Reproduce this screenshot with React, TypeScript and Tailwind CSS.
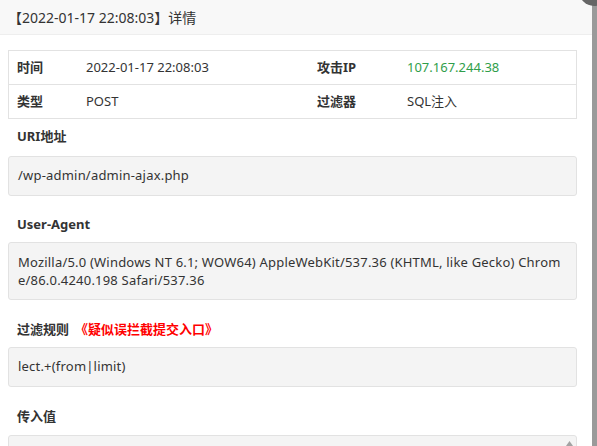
export default function App() {
  const font = "font-['Noto_Sans','Noto_Sans_CJK_SC',sans-serif]";
  return (
    <div className={`relative h-[446px] w-[597px] overflow-hidden bg-[#9a9a9a] ${font}`}>
      {/* Dialog */}
      <div className="h-full w-[592px] bg-white">
        <div className="flex h-[35px] items-center border-b border-[#eee] bg-[#f8f8f8] pl-[8px] text-[14px] text-[#333]">
          【2022-01-17 22:08:03】详情
        </div>
        <div className="px-[8px] pt-[15px] text-[13px] text-[#333]">
          <div className="w-[569px] border border-[#e2e2e2]">
            <div className="flex h-[34px] items-center border-b border-[#e2e2e2]">
              <div className="w-[77px] pl-[8px] font-bold">时间</div>
              <div className="w-[231px]">2022-01-17 22:08:03</div>
              <div className="w-[90px] font-bold">攻击IP</div>
              <div className="text-[#2f9e4a]">107.167.244.38</div>
            </div>
            <div className="flex h-[33px] items-center">
              <div className="w-[77px] pl-[8px] font-bold">类型</div>
              <div className="w-[231px]">POST</div>
              <div className="w-[90px] font-bold">过滤器</div>
              <div>SQL注入</div>
            </div>
          </div>

          <div className="pl-[9px] pt-[8px] pb-[10px] font-bold leading-[19px]">URI地址</div>
          <div className="flex h-[40px] w-[569px] items-center rounded-[3px] border border-[#e2e2e2] bg-[#f4f4f4] px-[9px] tracking-[0.2px]">
            /wp-admin/admin-ajax.php
          </div>

          <div className="pl-[9px] pt-[19px] pb-[8px] font-bold leading-[19px]">User-Agent</div>
          <div className="w-[569px] break-all rounded-[3px] border border-[#e2e2e2] bg-[#f4f4f4] px-[9px] py-[10px] leading-[18px] tracking-[0.2px]">
            Mozilla/5.0 (Windows NT 6.1; WOW64) AppleWebKit/537.36 (KHTML, like Gecko) Chrome/86.0.4240.198 Safari/537.36
          </div>

          <div className="pl-[9px] pt-[20px] pb-[8px] leading-[19px]">
            <span className="font-bold">过滤规则</span>
            <span className="ml-[6px] font-bold text-[#f00]">《疑似误拦截提交入口》</span>
          </div>
          <div className="flex h-[40px] w-[569px] items-center rounded-[3px] border border-[#e2e2e2] bg-[#f4f4f4] px-[9px] tracking-[0.2px]">
            lect.+(from|limit)
          </div>

          <div className="pl-[9px] pt-[20px] pb-[9px] font-bold leading-[19px]">传入值</div>
          <div className="relative h-[60px] w-[569px] rounded-[3px] border border-[#e2e2e2] bg-[#f4f4f4]">
            <div className="absolute right-0 top-0 flex h-[14px] w-[14px] items-center justify-center">
              <svg width="7" height="5" viewBox="0 0 7 5">
                <path d="M0 5 L3.5 0 L7 5 Z" fill="#a3a3a3" />
              </svg>
            </div>
          </div>
        </div>
      </div>
      {/* Close button */}
      <div className="absolute right-[-12px] top-[-24px] h-[30px] w-[30px] rounded-full bg-[#666]" />
    </div>
  );
}
